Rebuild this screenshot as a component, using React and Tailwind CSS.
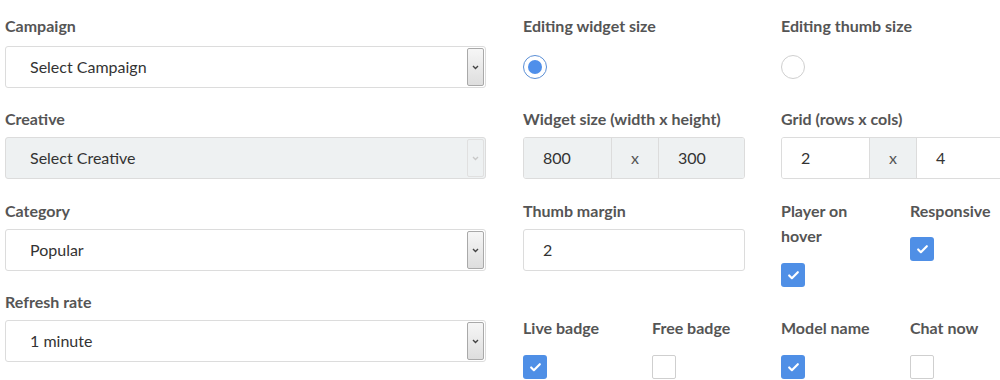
import { Check } from 'lucide-react'
import clsx from 'clsx'

const FONT = { fontFamily: 'Lato, "Open Sans", sans-serif' }

function Label({ children, className }) {
  return (
    <div className={clsx('text-[16px] font-bold leading-[25px] text-[#555]', className)}>
      {children}
    </div>
  )
}

function Select({ value, disabled, first }) {
  return (
    <div
      className={clsx(
        'flex h-[42px] items-stretch rounded-[3px] border border-[#dcdcdc]',
        first ? 'mt-[8px]' : 'mt-[6px]',
        disabled ? 'bg-[#eef1f2]' : 'bg-white',
      )}
    >
      <div className="flex flex-1 items-center pl-[24px] text-[16px] text-[#333]">{value}</div>
      <div
        className={clsx(
          'my-[1px] mr-[1px] flex w-[17px] items-center justify-center rounded-[2px] border',
          disabled
            ? 'border-[#e0e0e0] bg-[#eef1f2] text-[#c8c8c8]'
            : 'border-[#a9a9a9] bg-gradient-to-b from-[#f6f6f6] to-[#dedede] text-[#444]',
        )}
      >
        <svg width="7" height="5" viewBox="0 0 7 5">
          <path d="M1 1 L3.5 3.5 L6 1" fill="none" stroke="currentColor" strokeWidth="1.4" />
        </svg>
      </div>
    </div>
  )
}

function Field({ label, value, disabled, first, gap }) {
  return (
    <div className={gap}>
      <Label>{label}</Label>
      <Select value={value} disabled={disabled} first={first} />
    </div>
  )
}

function Radio({ checked }) {
  return (
    <div
      className={clsx(
        'flex h-[24px] w-[24px] items-center justify-center rounded-full border bg-white',
        checked ? 'border-[#5b8fd6]' : 'border-[#cfcfcf]',
      )}
    >
      {checked && <div className="h-[14px] w-[14px] rounded-full bg-[#4f8fea]" />}
    </div>
  )
}

function Checkbox({ checked }) {
  return checked ? (
    <div className="flex h-[24px] w-[24px] items-center justify-center rounded-[3px] bg-[#4f8fe6]">
      <Check size={13} strokeWidth={4} className="text-white" />
    </div>
  ) : (
    <div className="h-[24px] w-[24px] rounded-[2px] border border-[#cfcfcf] bg-white" />
  )
}

function Pair({ a, b, grey }) {
  const cell = grey ? 'bg-[#eef1f2]' : 'bg-white'
  return (
    <div className="mt-[6px] flex h-[42px] w-[222px] overflow-hidden rounded-[3px] border border-[#dcdcdc] text-[16px] text-[#333]">
      <div className={clsx('flex w-[87px] items-center pl-[19px]', cell)}>{a}</div>
      <div className="flex w-[48px] items-center justify-center border-x border-[#dcdcdc] bg-[#eef1f2] text-[#555]">
        x
      </div>
      <div className={clsx('flex flex-1 items-center pl-[19px]', cell)}>{b}</div>
    </div>
  )
}

export default function App() {
  return (
    <div className="flex h-[380px] w-[1000px] overflow-hidden bg-white" style={FONT}>
      <div className="ml-[5px] w-[481px] shrink-0 pt-[13px]">
        <Field first label="Campaign" value="Select Campaign" />
        <Field gap="mt-[18px]" label="Creative" value="Select Creative" disabled />
        <Field gap="mt-[19px]" label="Category" value="Popular" />
        <Field gap="mt-[18px]" label="Refresh rate" value="1 minute" />
      </div>

      <div className="ml-[37px] grid shrink-0 grid-cols-[129px_129px_129px_129px] content-start pt-[13px]">
        <div className="col-span-2">
          <Label>Editing widget size</Label>
          <div className="mt-[17px]">
            <Radio checked />
          </div>
        </div>
        <div className="col-span-2">
          <Label>Editing thumb size</Label>
          <div className="mt-[17px]">
            <Radio />
          </div>
        </div>

        <div className="col-span-2 mt-[27px]">
          <Label>Widget size (width x height)</Label>
          <Pair a="800" b="300" grey />
        </div>
        <div className="col-span-2 mt-[27px]">
          <Label>Grid (rows x cols)</Label>
          <Pair a="2" b="4" />
        </div>

        <div className="col-span-2 mt-[19px]">
          <Label>Thumb margin</Label>
          <div className="mt-[6px] flex h-[42px] w-[222px] items-center rounded-[3px] border border-[#dcdcdc] pl-[19px] text-[16px] text-[#333]">
            2
          </div>
        </div>
        <div className="mt-[19px]">
          <Label className="w-[90px]">Player on hover</Label>
          <div className="mt-[15px]">
            <Checkbox checked />
          </div>
        </div>
        <div className="mt-[19px]">
          <Label>Responsive</Label>
          <div className="mt-[14px]">
            <Checkbox checked />
          </div>
        </div>

        {[
          ['Live badge', true],
          ['Free badge', false],
          ['Model name', true],
          ['Chat now', false],
        ].map(([label, on]) => (
          <div key={label} className="mt-[28px]">
            <Label>{label}</Label>
            <div className="mt-[15px]">
              <Checkbox checked={on} />
            </div>
          </div>
        ))}
      </div>
    </div>
  )
}
